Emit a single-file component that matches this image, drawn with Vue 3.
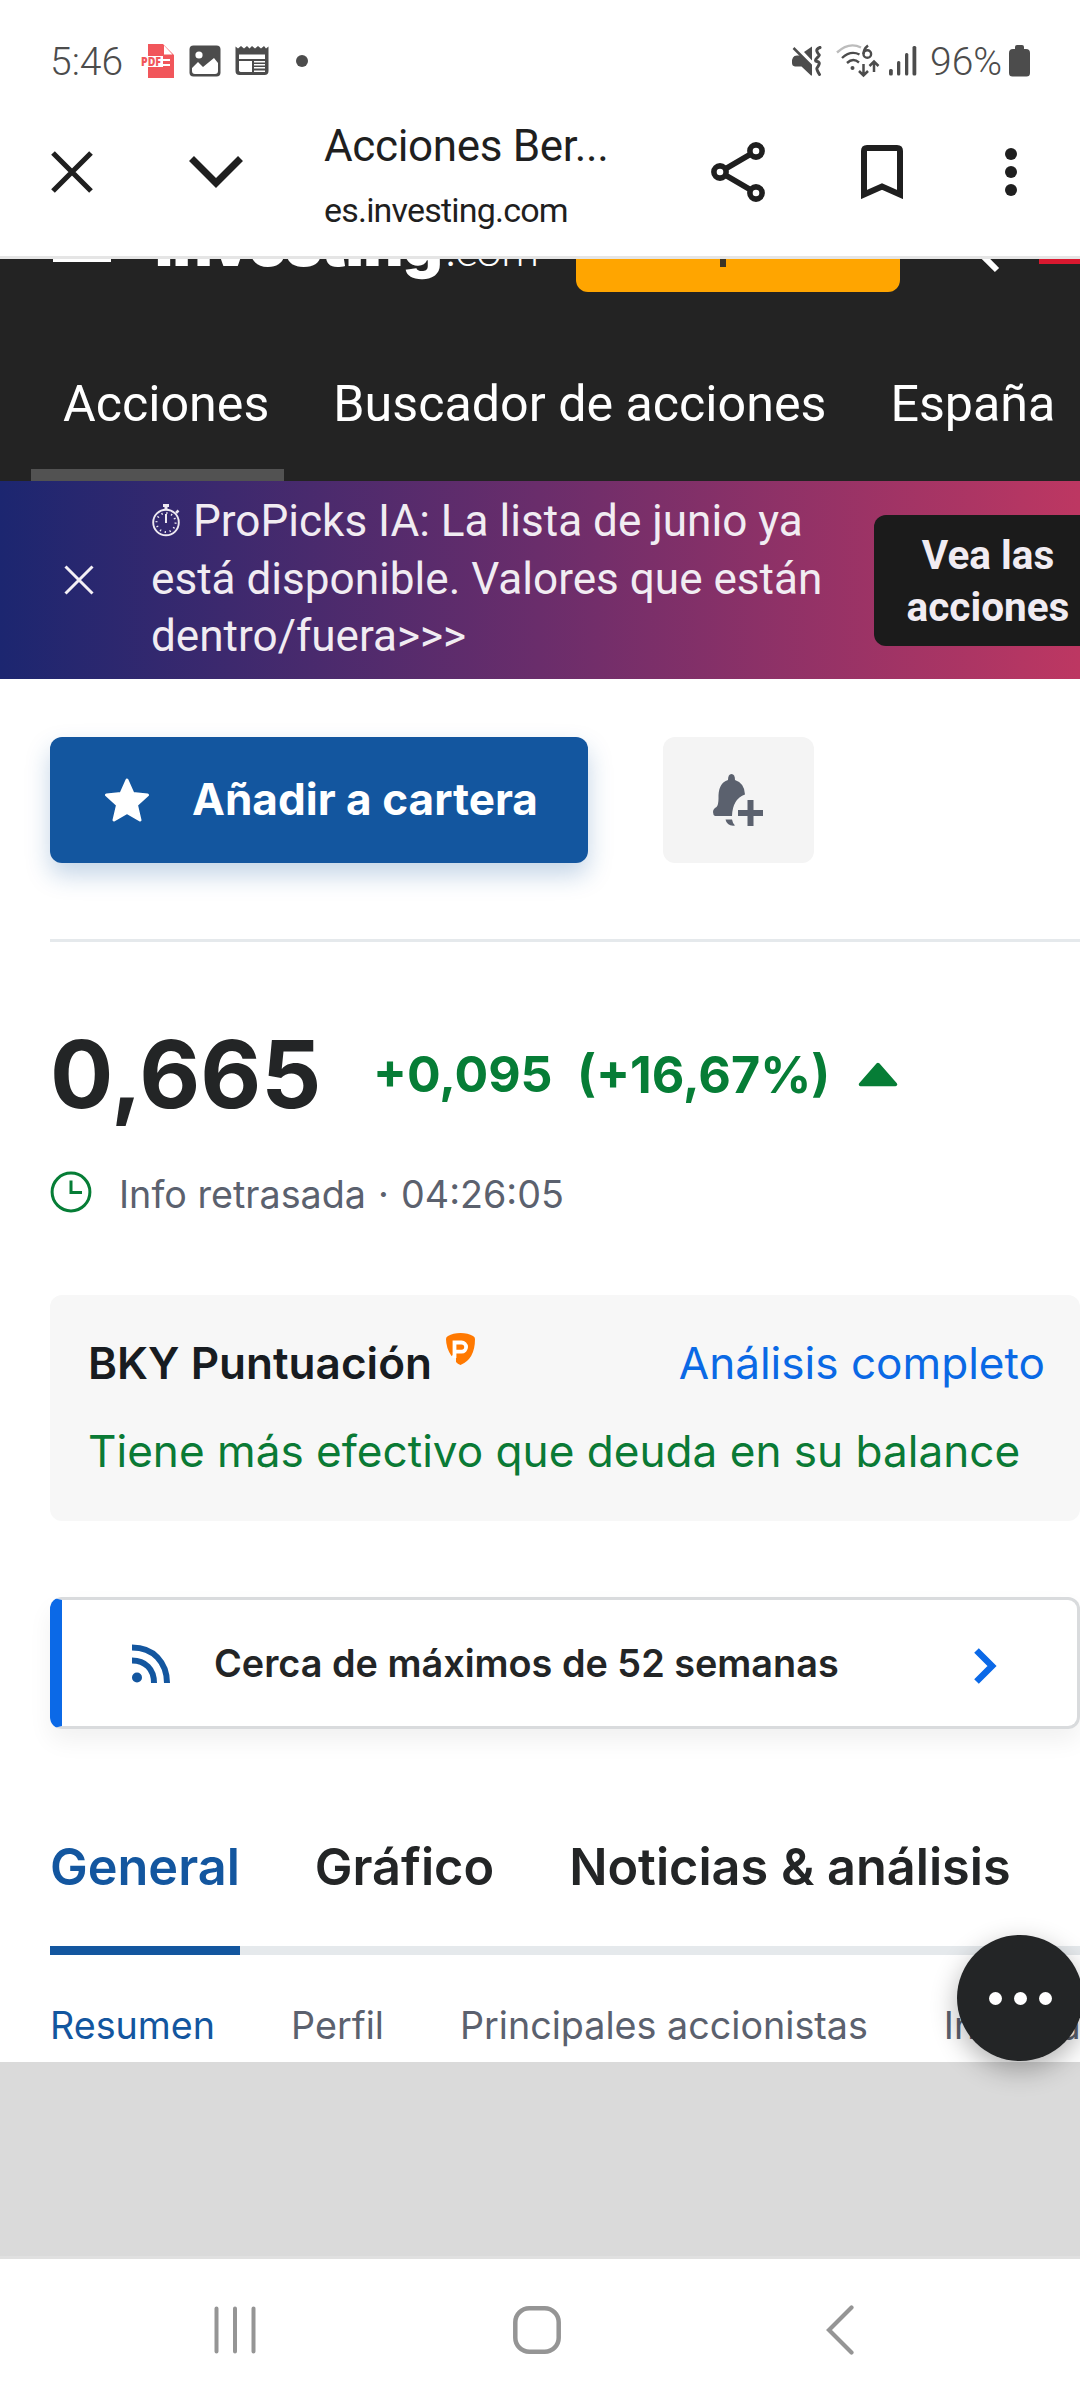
<template>
  <div class="screen">
    <div class="status">
      <span class="status__time">5:46</span>
      <svg class="status__pdf" width="34" height="34" viewBox="0 0 34 34">
        <path d="M7 0h15l11 11v23H7V23h15v-1h7v-2h-7v-3h7v-2h-7v-3H7z" fill="#f1565b" />
        <path d="M23 1.500v9h8.500z" fill="#fff" />
        <text x="0" y="22" class="pdf-label" textLength="20" lengthAdjust="spacingAndGlyphs">PDF</text>
      </svg>
      <svg class="status__image" width="32" height="32" viewBox="0 0 32 32">
        <rect x="0.500" y="0.500" width="31" height="31" rx="4" fill="#4c4c4c" />
        <circle cx="10" cy="10" r="3.600" fill="#fff" />
        <path d="M3 23l6-6 5 5 11-9 4 5v8q0 3-3 3H6q-3 0-3-3z" fill="#fff" />
      </svg>
      <svg class="status__news" width="34" height="32" viewBox="0 0 34 32">
        <path d="M.5 1.500l2.500 2 3-2.500 3 2.500 3-2.500 2.500 2.500 2.500-2.500 3 2.500 3-2.500 3 2.500 3-2.500 2 2.500 2.500-2V26q0 4-4 4h-25q-4 0-4-4z" fill="#4c4c4c" />
        <path d="M4 9.500h26v4.500H4zM4 16h13v11H5.500L4 26zM19 16h11v1.500H19zM19 19h11v1.500H19zM19 22h11v1.500H19zM19 25.500h11v1.500H19z" fill="#fff" />
      </svg>
      <span class="status__dot"></span>
      <span class="status__space"></span>
      <svg class="status__mute" width="30" height="30" viewBox="0 0 30 30">
        <path d="M1 11.500q1-2 4-2h3L20 19v10.500h-1L9.500 20.500H3Q0 20 0 17v-3z" fill="#4c4c4c" />
        <path d="M12 6l8-5.500v14z" fill="#4c4c4c" />
        <path d="M1.500 2l17.500 17.500" stroke="#4c4c4c" stroke-width="2.500" fill="none" />
        <path d="M28 1.500q-4 1.500-3 4t2 3-2 3.500 0 3.500 2 3-2 3.500 2.500 6.500" stroke="#4c4c4c" stroke-width="3" fill="none" stroke-linecap="round" />
      </svg>
      <svg class="status__wifi" width="44" height="34" viewBox="0 0 44 34" fill="none" stroke="#4c4c4c" stroke-width="2.400">
        <path d="M1 8.500Q13-2.500 25 3.500" stroke="#bcbcbc" />
        <path d="M6 14Q14.500 6 23.500 10.500M11 19Q17 13.500 23 18.500" />
        <circle cx="16.500" cy="24" r="2" fill="#4c4c4c" stroke="none" />
        <path d="M32 1.500Q27.500 5 27.500 10" />
        <circle cx="31.300" cy="10" r="3.800" />
        <path d="M27.500 20v11M23 27l4.500 4.500L32 27M38 28V18M33.500 22l4.500-4.500L42.500 22" stroke-width="2.500" />
      </svg>
      <svg class="status__signal" width="28" height="30" viewBox="0 0 28 30" fill="#4c4c4c">
        <rect x="0" y="23" width="3.800" height="6.500" rx="1.500" />
        <rect x="8" y="15" width="3.300" height="14.500" rx="1.500" />
        <rect x="16" y="7" width="3.300" height="22.500" rx="1.500" />
        <rect x="23.500" y="0" width="3.800" height="29.500" rx="1.500" />
      </svg>
      <span class="status__percent">96%</span>
      <svg class="status__battery" width="21" height="32" viewBox="0 0 21 32">
        <path d="M6 4V2q0-2 2-2h5q2 0 2 2v2h2q4 0 4 4v20q0 3.500-3.500 3.500h-14Q0 31.500 0 28V8q0-4 4-4z" fill="#4c4c4c" />
      </svg>
    </div>

    <div class="toolbar">
      <svg class="toolbar__close" width="42" height="42" viewBox="0 0 42 42">
        <path d="M2 2l38 38M40 2L2 40" stroke="#1f1f1f" stroke-width="5.200" fill="none" />
      </svg>
      <svg class="toolbar__down" width="54" height="32" viewBox="0 0 54 32">
        <path d="M2.500 2.500L27 27 51.500 2.500" stroke="#1f1f1f" stroke-width="7" fill="none" />
      </svg>
      <div class="toolbar__title">
        <span class="toolbar__name">Acciones Ber...</span>
        <span class="toolbar__url">es.investing.com</span>
      </div>
      <svg class="toolbar__share" width="54" height="60" viewBox="0 0 54 60" fill="none" stroke="#1f1f1f" stroke-width="5.600">
        <path d="M45 9L9 30l36 21" />
        <circle cx="45" cy="9" r="6.100" fill="#fff" />
        <circle cx="9" cy="30" r="6.100" fill="#fff" />
        <circle cx="45" cy="51" r="6.100" fill="#fff" />
      </svg>
      <svg class="toolbar__bookmark" width="42" height="54" viewBox="0 0 42 54">
        <path d="M3 49.500V6q0-3 3-3h30q3 0 3 3v43.500L21 41.500z" fill="none" stroke="#1f1f1f" stroke-width="6" />
      </svg>
      <svg class="toolbar__more" width="12" height="48" viewBox="0 0 12 48" fill="#1f1f1f">
        <circle cx="6" cy="6" r="6" />
        <circle cx="6" cy="24" r="6" />
        <circle cx="6" cy="42" r="6" />
      </svg>
    </div>

    <header class="site">
      <div class="site__top">
        <span class="site__menu"></span>
        <span class="site__logo"><b>Investing</b><i>.com</i></span>
        <span class="site__cta"><span class="site__cta-mark"></span></span>
        <svg class="site__search" width="50" height="50" viewBox="0 0 50 50" fill="none" stroke="#fff" stroke-width="6">
          <circle cx="17" cy="17" r="14" />
          <path d="M27 27l20 20" />
        </svg>
        <span class="site__flag"></span>
      </div>
      <nav class="site__nav">
        <span
          v-for="(item, i) in menu"
          :key="item"
          :class="['site__link', { 'site__link--active': i === 0 }]"
        >{{ item }}</span>
      </nav>
    </header>

    <div class="promo">
      <svg class="promo__close" width="30" height="30" viewBox="0 0 30 30">
        <path d="M1.500 1.500l27 27M28.500 1.500l-27 27" stroke="#f4f0f6" stroke-width="3" fill="none" />
      </svg>
      <p class="promo__text">
        <svg class="promo__watch" width="29" height="33" viewBox="0 0 29 33" fill="none" stroke="#eee9f1">
          <circle cx="14" cy="18.500" r="12.800" stroke-width="1.900" />
          <circle cx="14" cy="18.500" r="9.500" stroke-width="2" stroke-dasharray="1.300 3.674" />
          <path d="M14 10v9" stroke-width="2" />
          <path d="M11 1.500h6M14 2v4" stroke-width="3" />
          <path d="M24 9l2.500-2.500" stroke-width="2.500" />
        </svg>
        ProPicks IA: La lista de junio ya<br />está disponible. Valores que están<br />dentro/fuera&gt;&gt;&gt;
      </p>
      <span class="promo__button">Vea las<br />acciones</span>
    </div>

    <main class="page">
      <div class="actions">
        <span class="actions__add">
          <svg width="46" height="44" viewBox="0 0 46 44">
            <path d="M23 2l6 13.500 14.500 1.500-11 10 3.500 15L23 34.500 10 42l3.500-15-11-10L17 15.500z" fill="#fff" stroke="#fff" stroke-width="3" stroke-linejoin="round" />
          </svg>
          <span class="actions__label">Añadir a cartera</span>
        </span>
        <span class="actions__bell">
          <svg width="51" height="52" viewBox="0 0 51 52" fill="#5b616e">
            <path d="M18.500 0q3.500 0 3.500 6 9.500 3 10 14.500-12.500 4.500-13 21.500H2q-2-1-2-4 0-3 3.500-5 2-2 2-8.500Q5 9 15 6q0-6 3.500-6z" />
            <path d="M12.500 45.500H19q.5 3.500 3 6-8 1-9.500-6z" />
            <path d="M34.500 26h6v10H50v6h-9.500v10h-6V42H25v-6h9.500z" />
          </svg>
        </span>
      </div>

      <div class="quote">
        <span class="quote__price">0,665</span>
        <span class="quote__change">+0,095</span>
        <span class="quote__percent">(+16,67%)</span>
        <svg width="40" height="25" viewBox="0 0 40 25">
          <path d="M20 2.500L37.500 22.500H2.500z" fill="#067d36" stroke="#067d36" stroke-width="3.500" stroke-linejoin="round" />
        </svg>
      </div>

      <div class="delay">
        <svg width="42" height="42" viewBox="0 0 42 42" fill="none" stroke="#067d36" stroke-width="3">
          <circle cx="21" cy="21" r="18.900" />
          <path d="M21 9.500v12h11" />
        </svg>
        <span class="delay__text">Info retrasada <span class="delay__sep">·</span> 04:26:05</span>
      </div>

      <section class="score">
        <div class="score__head">
          <span class="score__title">BKY Puntuación</span>
          <svg class="score__badge" width="29" height="32" viewBox="0 0 29 32">
            <path d="M14.500 0Q22 0 27 3q2 1 2 3Q29 26 14.500 32q-3-1-4.500-3V20L5.500 23Q0 15 0 6q0-2 2-3 5-3 12.500-3z" fill="#ff7901" />
            <path d="M8.500 25V9.500h7a4.600 4.600 0 0 1 0 9.200H8.500" fill="none" stroke="#fff" stroke-width="3.800" />
          </svg>
          <span class="score__link">Análisis completo</span>
        </div>
        <p class="score__text">Tiene más efectivo que deuda en su balance</p>
      </section>

      <section class="alert">
        <svg width="39" height="39" viewBox="0 0 39 39" fill="none" stroke="#13569f" stroke-width="6">
          <path d="M0 3.500q16 0 25.500 10T35 39M0 16.500q10 0 16 6T22 39" />
          <circle cx="5" cy="33.500" r="5" fill="#13569f" stroke="none" />
        </svg>
        <span class="alert__text">Cerca de máximos de 52 semanas</span>
        <svg class="alert__arrow" width="23" height="36" viewBox="0 0 23 36">
          <path d="M2.500 2.500L18 18 2.500 33.500" fill="none" stroke="#0b69e7" stroke-width="6.500" />
        </svg>
      </section>

      <nav class="tabs">
        <span
          v-for="(tab, i) in tabs"
          :key="tab"
          :class="['tabs__item', { 'tabs__item--active': i === 0 }]"
        >{{ tab }}</span>
      </nav>
      <nav class="subtabs">
        <span
          v-for="(tab, i) in subtabs"
          :key="tab"
          :class="['subtabs__item', { 'subtabs__item--active': i === 0 }]"
        >{{ tab }}</span>
      </nav>
      <span class="fab"><i></i><i></i><i></i></span>
    </main>

    <div class="ad"></div>

    <div class="navbar">
      <svg class="navbar__recent" width="42" height="48" viewBox="0 0 42 48">
        <path d="M2.500 2.500v43M21 2.500v43M39.500 2.500v43" stroke="#959595" stroke-width="4" stroke-linecap="round" />
      </svg>
      <svg class="navbar__home" width="48" height="48" viewBox="0 0 48 48">
        <rect x="2.300" y="2.300" width="43.400" height="43.400" rx="14" fill="none" stroke="#959595" stroke-width="4.500" />
      </svg>
      <svg class="navbar__back" width="28" height="50" viewBox="0 0 28 50">
        <path d="M25.500 2.500L3 25l22.500 22.500" fill="none" stroke="#959595" stroke-width="4.200" stroke-linecap="round" />
      </svg>
    </div>
  </div>
</template>

<script setup>
const menu = ['Acciones', 'Buscador de acciones', 'España'];
const tabs = ['General', 'Gráfico', 'Noticias & análisis'];
const subtabs = ['Resumen', 'Perfil', 'Principales accionistas', 'Información'];
</script>

<style>
body {
  margin: 0;
  background: #fff;
}
</style>

<style scoped>
.screen {
  width: 1080px;
  height: 2400px;
  overflow: hidden;
  display: flex;
  flex-direction: column;
  background: #fff;
  font-family: Inter, "Liberation Sans", sans-serif;
  white-space: nowrap;
}

.screen svg {
  display: block;
  flex: none;
}

/* status bar */
.status {
  box-sizing: border-box;
  flex: none;
  height: 88px;
  padding: 34px 50px 0 50px;
  display: flex;
  align-items: center;
  color: #4c4c4c;
  font: 39px/54px Roboto, sans-serif;
}

.status__time {
  width: 91px;
  margin-top: 2px;
  font-weight: 300;
}

.pdf-label {
  font: 900 12px "Open Sans", sans-serif;
  fill: #f1565b;
}

.status__image {
  margin-left: 14px;
}

.status__news {
  margin-left: 14px;
}

.status__dot {
  width: 12px;
  height: 12px;
  margin-left: 27px;
  border-radius: 50%;
  background: #4c4c4c;
}

.status__space {
  flex: 1;
}

.status__wifi {
  margin-left: 14px;
}

.status__signal {
  margin-left: 9px;
}

.status__percent {
  width: 79px;
  margin: 2px 0 0 13px;
  font-weight: 300;
}

/* browser toolbar */
.toolbar {
  box-sizing: border-box;
  flex: none;
  height: 171px;
  padding: 0 63px 0 51px;
  border-bottom: 3px solid #e5e5e5;
  display: flex;
  align-items: center;
  color: #1f1f1f;
  font-family: Roboto, sans-serif;
}

.toolbar__down {
  margin-left: 96px;
}

.toolbar__title {
  width: 387px;
  margin-left: 81px;
  margin-top: 10px;
  display: flex;
  flex-direction: column;
}

.toolbar__name {
  font-size: 44px;
  line-height: 65px;
  letter-spacing: -0.35px;
}

.toolbar__url {
  font-size: 34px;
  line-height: 62px;
  letter-spacing: -0.8px;
}

.toolbar__bookmark {
  margin-left: 96px;
}

.toolbar__more {
  margin-left: auto;
}

/* site header */
.site {
  flex: none;
  height: 222px;
  overflow: hidden;
  background: #232323;
  color: #fff;
}

.site__top {
  height: 110px;
  margin-top: -77px;
  display: flex;
  align-items: flex-end;
}

.site__top > * {
  flex: none;
}

.site__menu {
  width: 58px;
  height: 8px;
  margin: 0 0 30px 53px;
  background: #fff;
}

.site__logo {
  width: 421px;
  margin-left: 44px;
  margin-bottom: 13px;
  font-size: 62px;
  line-height: 62px;
  display: flex;
  align-items: baseline;
}

.site__logo b {
  width: 290px;
  font-weight: 900;
  letter-spacing: -0.6px;
}

.site__logo i {
  font: 300 48px/62px Lato, sans-serif;
  letter-spacing: -1.5px;
}

.site__cta {
  width: 324px;
  height: 92px;
  border-radius: 12px;
  background: #ffa500;
}

.site__cta-mark {
  display: block;
  width: 6px;
  height: 67px;
  margin-left: 144px;
  background: #3a3326;
}

.site__search {
  margin: 0 0 19px 50px;
}

.site__flag {
  width: 60px;
  height: 40px;
  margin: 0 0 28px 39px;
  background: #d9182f;
}

.site__nav {
  display: flex;
  gap: 17px;
  padding-left: 31px;
}

.site__link {
  height: 129px;
  padding: 48px 15px 0 32px;
  border-bottom: 12px solid transparent;
  font: 50.200px/127px Roboto, sans-serif;
}

.site__link--active {
  border-color: #525252;
}

/* promo strip */
.promo {
  flex: none;
  height: 198px;
  display: flex;
  align-items: center;
  background: linear-gradient(90deg, #1c2670, #6a2d6b 50%, #bd3762);
  color: #f1ecf2;
  font-family: Roboto, sans-serif;
}

.promo__close {
  margin-left: 64px;
}

.promo__text {
  flex: none;
  width: 723px;
  margin: -1px 0 0 57px;
  font-size: 44.100px;
  line-height: 57.500px;
}

.screen .promo__watch {
  display: inline-block;
  margin: 0 1px -1px 1px;
}

.promo__button {
  flex: none;
  width: 228px;
  padding: 14px 0 13px;
  border-radius: 12px;
  background: #1b1b1b;
  font-size: 40.500px;
  font-weight: 700;
  line-height: 52px;
  text-align: center;
}

/* page body */
.page {
  position: relative;
  flex: none;
  height: 1325px;
  padding: 58px 0 0 50px;
  color: #232526;
}

.actions {
  display: flex;
  gap: 75px;
  padding-bottom: 76px;
  border-bottom: 3px solid #e5e9ec;
}

.actions__add {
  box-sizing: border-box;
  width: 538px;
  height: 126px;
  padding-left: 54px;
  display: flex;
  align-items: center;
  gap: 42px;
  border-radius: 12px;
  background: #13569f;
  box-shadow: 0 12px 24px rgba(19, 86, 159, 0.25);
  color: #fff;
  font-size: 44.100px;
  font-weight: 700;
}

.actions__label {
  margin-top: -3px;
}

.actions__bell {
  width: 151px;
  height: 126px;
  display: flex;
  align-items: center;
  justify-content: center;
  border-radius: 12px;
  background: #f4f4f4;
}

.quote {
  height: 120px;
  margin-top: 72px;
  display: flex;
  align-items: center;
  font-weight: 700;
}

.quote__price {
  width: 323px;
  font-size: 94px;
}

.quote__change {
  width: 204px;
  font-size: 50px;
  color: #067d36;
}

.quote__percent {
  width: 281px;
  font-size: 50.300px;
  color: #067d36;
}

.delay {
  height: 60px;
  margin-top: 28px;
  display: flex;
  align-items: center;
  gap: 27px;
  color: #5b616e;
}

.delay__text {
  margin-top: 3px;
  font-size: 37.700px;
}

.delay__sep {
  margin: 0 1.500px;
}

.score {
  height: 226px;
  margin-top: 73px;
  border-radius: 12px;
  background: #f7f7f7;
  font-size: 44.100px;
}

.score__head {
  display: flex;
  padding: 38px 35px 0 38px;
  line-height: 60px;
}

.score__title {
  width: 358px;
  font-weight: 600;
  color: #181c21;
}

.score__link {
  margin-left: auto;
  color: #0a69e5;
}

.score__text {
  margin: 28px 0 0 38px;
  line-height: 60px;
  color: #0a7a35;
}

.alert {
  box-sizing: border-box;
  height: 132px;
  margin-top: 76px;
  padding: 0 80px 0 70px;
  display: flex;
  align-items: center;
  border: 3px solid #d9dbdd;
  border-left: 12px solid #0b69e7;
  border-radius: 12px;
  box-shadow: 0 12px 24px rgba(0, 0, 0, 0.06);
}

.alert__text {
  flex: 1;
  margin-left: 43px;
  font-size: 37.800px;
  font-weight: 600;
}

.alert__arrow {
  margin-top: 5px;
}

.tabs {
  height: 217px;
  display: flex;
  gap: 75px;
  border-bottom: 9px solid #e5e9ec;
}

.tabs__item {
  height: 79px;
  padding-top: 138px;
  border-bottom: 9px solid transparent;
  font-size: 50.400px;
  font-weight: 600;
  line-height: 0;
}

.tabs__item--active {
  color: #13569f;
  border-color: #13569f;
}

.subtabs {
  display: flex;
  gap: 76px;
  padding-top: 40px;
  font-size: 37.700px;
  line-height: 60px;
  color: #5b616e;
}

.subtabs__item--active {
  color: #13569f;
}

.fab {
  position: absolute;
  left: 957px;
  top: 1256px;
  z-index: 1;
  width: 126px;
  height: 126px;
  display: flex;
  align-items: center;
  justify-content: center;
  gap: 12px;
  border-radius: 50%;
  background: #232526;
  box-shadow: 0 9px 27px rgba(0, 0, 0, 0.3);
}

.fab i {
  width: 13px;
  height: 13px;
  border-radius: 50%;
  background: #fff;
}

.ad {
  flex: none;
  height: 194px;
  background: #dadada;
  border-bottom: 3px solid #e0e0e0;
}

/* system navigation */
.navbar {
  flex: 1;
  display: flex;
  align-items: center;
  padding-left: 214px;
}

.navbar__home {
  margin-left: 257px;
}

.navbar__back {
  margin-left: 265px;
}
</style>
